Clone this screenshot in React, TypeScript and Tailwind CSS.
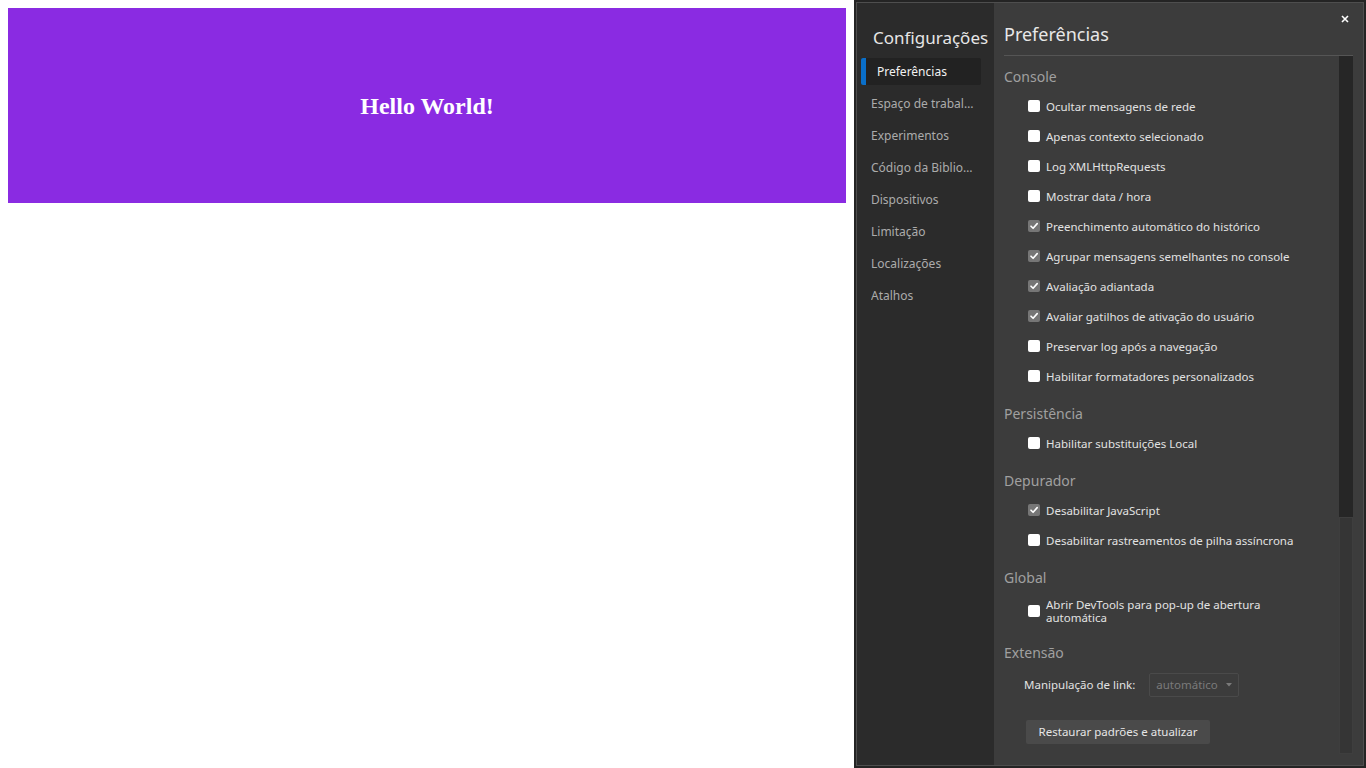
import React from "react";

type Row = { label: string; checked?: boolean };
type Section = { title: string; rows: Row[] };

const sections: Section[] = [
  {
    title: "Console",
    rows: [
      { label: "Ocultar mensagens de rede" },
      { label: "Apenas contexto selecionado" },
      { label: "Log XMLHttpRequests" },
      { label: "Mostrar data / hora" },
      { label: "Preenchimento automático do histórico", checked: true },
      { label: "Agrupar mensagens semelhantes no console", checked: true },
      { label: "Avaliação adiantada", checked: true },
      { label: "Avaliar gatilhos de ativação do usuário", checked: true },
      { label: "Preservar log após a navegação" },
      { label: "Habilitar formatadores personalizados" },
    ],
  },
  { title: "Persistência", rows: [{ label: "Habilitar substituições Local" }] },
  {
    title: "Depurador",
    rows: [
      { label: "Desabilitar JavaScript", checked: true },
      { label: "Desabilitar rastreamentos de pilha assíncrona" },
    ],
  },
  {
    title: "Global",
    rows: [{ label: "Abrir DevTools para pop-up de abertura automática" }],
  },
];

const navItems = [
  "Espaço de trabalho",
  "Experimentos",
  "Código da Biblioteca ignorado",
  "Dispositivos",
  "Limitação",
  "Localizações",
  "Atalhos",
];

function Box({ checked }: { checked?: boolean }) {
  if (checked) {
    return (
      <span className="flex h-[12px] w-[12px] shrink-0 items-center justify-center rounded-[2px] bg-[#767676]">
        <svg width="10" height="10" viewBox="0 0 10 10">
          <path d="M2 5.2 L4.1 7.3 L8.2 2.6" fill="none" stroke="#ffffff" strokeWidth="1.6" strokeLinecap="round" strokeLinejoin="round" />
        </svg>
      </span>
    );
  }
  return <span className="block h-[12px] w-[12px] shrink-0 rounded-[2px] bg-white" />;
}

function Header({ title }: { title: string }) {
  return (
    <div className="h-[37px] pt-[14px] text-[14px] leading-[17px] text-[#a0a0a0]">{title}</div>
  );
}

export default function App() {
  return (
    <div className="flex h-[768px] w-[1366px] overflow-hidden bg-white" style={{ fontFamily: '"Noto Sans", "Open Sans", sans-serif' }}>
      <div className="flex-1 p-2">
        <div className="flex h-[195px] items-center justify-center bg-[#8a2be2]">
          <span className="text-[24px] font-bold text-white" style={{ fontFamily: '"Liberation Serif", "Times New Roman", serif' }}>
            Hello World!
          </span>
        </div>
      </div>
      <div className="h-[768px] w-[512px] bg-[#242424] p-[2px]">
        <div className="relative flex h-full border border-[#4e4e4e]">
          {/* sidebar */}
          <div className="w-[137px] shrink-0 bg-[#2b2b2b] pl-[4px] pr-[13px]">
            <div className="pl-[12px] pt-[23px] text-[17px] leading-[24px] text-[#e6e6e6] whitespace-nowrap">Configurações</div>
            <div className="mt-[8px] flex flex-col gap-[5px]">
              <div className="flex h-[27px] items-center rounded-[2px] bg-[#222222]">
                <span className="h-full w-[5px] rounded-l-[2px] bg-[#0a6fc9]" />
                <span className="pl-[11px] text-[12px] text-[#f2f2f2]">Preferências</span>
              </div>
              {navItems.map((n) => (
                <div key={n} className="flex h-[27px] items-center pl-[10px]">
                  <span className="block w-[103px] truncate text-[12px] text-[#ababab]">{n}</span>
                </div>
              ))}
            </div>
          </div>
          {/* content */}
          <div className="flex flex-1 flex-col bg-[#3c3c3c] px-[10px]">
            <div className="border-b border-[#555555] pb-[9px] pt-[19px] text-[18px] leading-[24px] text-[#e8e8e8]">Preferências</div>
            <div className="flex h-[698px]">
              <div className="-mt-[2px] flex-1 overflow-hidden">
                {sections.map((s) => (
                  <div key={s.title}>
                    <Header title={s.title} />
                    {s.rows.map((r) => (
                      <div key={r.label} className={`flex min-h-[30px] items-center gap-[6px] pl-[24px] ${r.label.startsWith("Abrir") ? "py-[6px]" : ""}`}>
                        <Box checked={r.checked} />
                        <span className="max-w-[258px] text-[11.5px] leading-[13px] text-[#e2e2e2]">{r.label}</span>
                      </div>
                    ))}
                  </div>
                ))}
                <Header title="Extensão" />
                <div className="flex h-[36px] items-center pl-[20px]">
                  <span className="text-[11.5px] text-[#e2e2e2]">Manipulação de link:</span>
                  <div className="ml-[14px] flex h-[24px] w-[90px] items-center justify-between rounded-[2px] border border-[#4a4a4a] pl-[6px] pr-[6px]">
                    <span className="text-[11.5px] text-[#7a7a7a]">automático</span>
                    <svg width="6" height="4" viewBox="0 0 6 4"><path d="M0 0 L6 0 L3 3.5 Z" fill="#7a7a7a" /></svg>
                  </div>
                </div>
                <div className="pl-[22px] pt-[17px]">
                  <div className="flex h-[24px] w-[184px] items-center justify-center rounded-[2px] bg-[#4a4a4a] text-[11.5px] text-[#e6e6e6]">
                    Restaurar padrões e atualizar
                  </div>
                </div>
              </div>
              <div className="flex w-[14px] shrink-0 flex-col bg-[#353535]">
                <div className="h-[461px] bg-[#262626]" />
                <div className="flex-1 border border-[#3e3e3e]" />
              </div>
            </div>
          </div>
          <svg className="absolute right-[14px] top-[12px]" width="8" height="8" viewBox="0 0 8 8">
            <path d="M1 1 L7 7 M7 1 L1 7" stroke="#ffffff" strokeWidth="1.6" />
          </svg>
        </div>
      </div>
    </div>
  );
}
